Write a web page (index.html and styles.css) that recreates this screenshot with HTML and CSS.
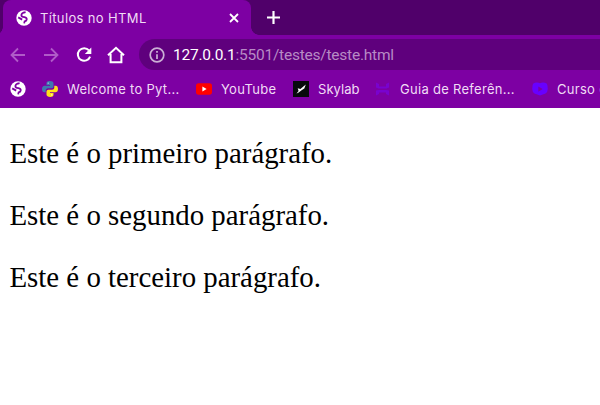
FILE: index.html
```html
<!DOCTYPE html>
<html lang="pt-BR">
<head>
<meta charset="utf-8">
<title>Títulos no HTML</title>
<link rel="stylesheet" href="styles.css">
</head>
<body>
<svg class="defs" aria-hidden="true">
  <symbol id="globe" viewBox="0 0 16 16">
    <circle cx="8" cy="8" r="7.7" fill="#fff"/>
    <path d="M9.600 2.200Q5.200 3 5.400 5.300 5.500 6.700 8.400 7.200 11 7.800 10.700 9.500 10.400 11 8.600 11.400L8.200 13.400M2.200 7.400 6.200 9.600" fill="none" stroke="#7d00a3" stroke-width="1.800"/>
  </symbol>
</svg>
<header>
  <div class="tabstrip">
    <div class="tab">
      <svg class="globe"><use href="#globe"/></svg>
      <span class="title">Títulos no HTML</span>
      <svg class="close" viewBox="0 0 10 10"><path d="M1 1 9 9M9 1 1 9"/></svg>
    </div>
    <svg class="plus" viewBox="0 0 12 12"><path d="M6 0V12M0 6H12"/></svg>
  </div>
  <nav class="toolbar">
    <svg class="tool dim" viewBox="0 0 16 16"><path d="M15 8H2M8 1.5 1.5 8 8 14.5"/></svg>
    <svg class="tool dim" viewBox="0 0 16 16"><path d="M1 8H14M8 1.5 14.5 8 8 14.5"/></svg>
    <svg class="tool reload" viewBox="0 0 16 16"><path d="M13 3.4A6.3 6.3 0 1 0 14.1 9.6"/><path class="solid" d="M15.3.5V7H8.8Z"/></svg>
    <svg class="tool home" viewBox="0 0 18 18"><path d="M1 9.3 9 1.8 17 9.3M3.6 8V16.2H14.4V8"/></svg>
    <div class="omnibox">
      <svg class="info" viewBox="0 0 16 16"><circle cx="8" cy="8" r="6.8"/><path d="M8 7.2V12M8 4V5.8"/></svg>
      <span class="url"><b>127.0.0.1</b>:5501/testes/teste.html</span>
    </div>
  </nav>
  <div class="bookmarks">
    <svg class="globe"><use href="#globe"/></svg>
    <div class="bookmark python">
      <svg viewBox="0 0 16 16"><path fill="#3f78b0" d="M7.8 0C5 0 4.5.9 4.5 2.4V4H8v.7H2.7C.9 4.7 0 6 0 8c0 2.1.9 3.3 2.4 3.3h1.3V9.5c0-1.3 1-2.3 2.3-2.3h3.6c1.1 0 1.9-.9 1.9-2V2.4C11.5.8 10 0 7.8 0Z"/><path fill="#ffe01b" d="M8.2 16c2.8 0 3.3-.9 3.3-2.4V12H8v-.7h5.3c1.8 0 2.7-1.3 2.7-3.3 0-2.1-.9-3.3-2.4-3.3h-1.3v1.8c0 1.3-1 2.3-2.3 2.3H6.4c-1.1 0-1.9.9-1.9 2v2.8C4.5 15.2 6 16 8.2 16Z"/><circle cx="6.2" cy="2.1" r=".7" fill="#cfe0ee"/><circle cx="9.8" cy="13.9" r=".7" fill="#fff"/></svg>
      <span>Welcome to Pyt...</span>
    </div>
    <div class="bookmark youtube">
      <svg viewBox="0 0 16 16"><rect y="2.3" width="16" height="11.4" rx="2.6" fill="#f00"/><path d="M6.4 5.6V10.4L10.6 8Z" fill="#fff"/></svg>
      <span>YouTube</span>
    </div>
    <div class="bookmark skylab">
      <svg viewBox="0 0 16 16"><path fill="#080a0c" d="M0 0H16V16H0Z"/><path fill="#fff" d="M12.8 3.5 11.3 7.600 8.600 9.300 5.300 11.800 3.500 12.600 5.600 9.900 4.700 7.300 7.400 7.900Z"/></svg>
      <span>Skylab</span>
    </div>
    <div class="bookmark guia">
      <svg viewBox="0 0 16 16"><path d="M1 1.500 4 3V5.600H11V3L14 1.500V6.500L11.500 7.500H3.500L1 6.500ZM1 14.500 4 13V11.500H11V13L14 14.500V9.500L11.500 9H3.500L1 9.500Z" fill="#7903cf"/></svg>
      <span>Guia de Referên...</span>
    </div>
    <div class="bookmark curso">
      <svg viewBox="0 0 16 16"><path fill="#6800ff" d="M3 1.800Q5.500 1 8 2.300 10.500 1 13 1.800 16 2.500 15.500 6 16.500 10 13.500 12.500L8 14.500 2.500 12.500Q-.5 10 .5 6 0 2.500 3 1.800Z"/><path d="M6.300 5.400V10.800L10.700 8.100Z" fill="#7d00a3"/></svg>
      <span>Curso d</span>
    </div>
  </div>
</header>
<main>
  <p>Este é o primeiro parágrafo.</p>
  <p>Este é o segundo parágrafo.</p>
  <p>Este é o terceiro parágrafo.</p>
</main>
</body>
</html>
```
FILE: styles.css
```css
* { box-sizing: border-box; }
body { margin: 0; height: 405px; overflow: hidden; background: #fff; }
svg { display: block; flex: none; }
.defs { position: absolute; width: 0; height: 0; }
header {
  height: 108px;
  overflow: hidden;
  background: #7d00a3;
  color: #f0dcf5;
  font: 13px/18px Inter, sans-serif;
  letter-spacing: .29px;
  white-space: nowrap;
}
.tabstrip { display: flex; height: 35px; padding-left: 3px; background: #50006a; }
.tab {
  display: flex;
  align-items: center;
  width: 248px;
  padding: 0 12px 0 13px;
  background: #7d00a3;
  border-radius: 8px 8px 0 0;
  position: relative;
}
.tab::before, .tab::after {
  content: "";
  position: absolute;
  bottom: 0;
  width: 8px;
  height: 8px;
}
.tab::before { right: 100%; background: radial-gradient(circle at 0 0, #50006a 7.5px, #7d00a3 8px); }
.tab::after { left: 100%; background: radial-gradient(circle at 100% 0, #50006a 7.5px, #7d00a3 8px); }
.globe { width: 16px; height: 16px; }
.title { flex: 1; margin-left: 8px; letter-spacing: .36px; }
.close { width: 10px; height: 10px; stroke: #fff; stroke-width: 1.8; }
.plus { width: 13px; height: 13px; margin: 11px 0 0 16px; stroke: #fff; stroke-width: 2; }
.toolbar { display: flex; align-items: center; height: 39px; padding-left: 10px; }
.tool { width: 16px; height: 16px; margin-right: 17px; fill: none; stroke: #fff; stroke-width: 2; }
.tool .solid { fill: #fff; stroke: none; }
.dim { stroke: #b05bc8; stroke-width: 1.8; }
.home { width: 18px; height: 18px; margin: 0 14px 0 -2px; }
.omnibox {
  display: flex;
  align-items: center;
  flex: 1;
  height: 31px;
  padding-left: 10px;
  background: #5f007d;
  border-radius: 16px 0 0 16px;
}
.info { width: 16px; height: 16px; fill: none; stroke: #cbb0d5; stroke-width: 1.7; }
.url { margin-left: 8px; font: 15.5px/20px Roboto, sans-serif; letter-spacing: -.23px; color: #b78bc5; }
.url b { font-weight: 400; color: #fff; }
.bookmarks { display: flex; align-items: center; height: 30px; padding-left: 10px; }
.bookmark { display: flex; align-items: center; flex: none; }
.bookmark svg { width: 16px; height: 16px; margin-right: 9px; }
.python { width: 154px; margin-left: 16px; }
.youtube { width: 97px; }
.skylab { width: 82px; letter-spacing: .05px; }
.guia { width: 157px; }
main { padding: 0 9.5px; font: 28.85px/34px "Liberation Serif", serif; color: #000; }
p { margin: 28px 0; }
```
